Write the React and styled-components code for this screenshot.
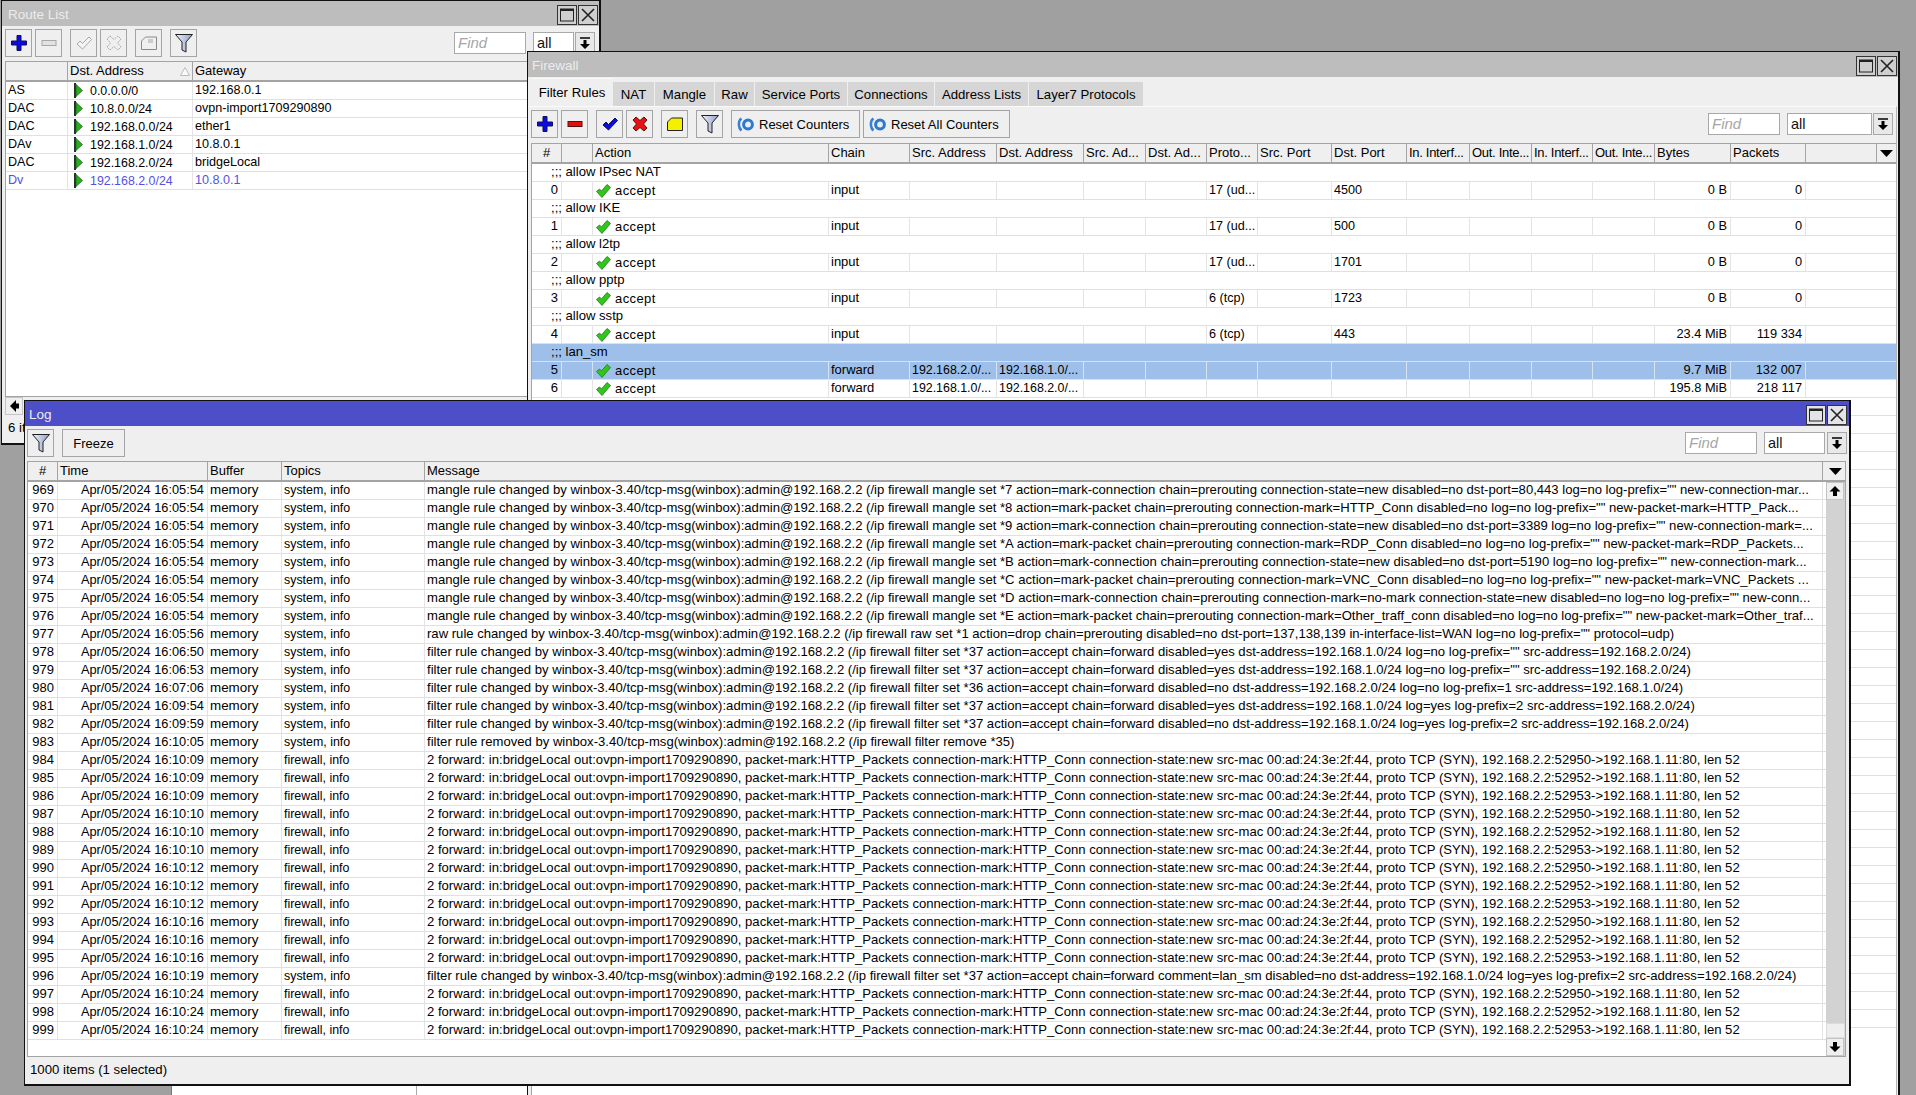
import styled, { createGlobalStyle } from "styled-components";

const GlobalStyle = createGlobalStyle`
  html, body { margin: 0; padding: 0; height: 100%; overflow: hidden; }
  body { background: #a0a0a0; font-family: "Liberation Sans", Arial, sans-serif; font-size: 12.6px; color: #000; }
`;

const routeCols = "62px 125px 1fr";
const firewallCols = "30px 31px 236px 81px 87px 87px 62px 61px 51px 74px 75px 63px 62px 61px 62px 76px 75px 71px 20px";
const logCols = "30px 150px 74px 143px 1398px 23px";

const routes = [
  ["AS", "0.0.0.0/0", "192.168.0.1"],
  ["DAC", "10.8.0.0/24", "ovpn-import1709290890"],
  ["DAC", "192.168.0.0/24", "ether1"],
  ["DAv", "192.168.1.0/24", "10.8.0.1"],
  ["DAC", "192.168.2.0/24", "bridgeLocal"],
  ["Dv", "192.168.2.0/24", "10.8.0.1", true],
];

const firewallHead = ["#", "", "Action", "Chain", "Src. Address", "Dst. Address", "Src. Ad...", "Dst. Ad...", "Proto...", "Src. Port", "Dst. Port", "In. Interf...", "Out. Inte...", "In. Interf...", "Out. Inte...", "Bytes", "Packets", ""];

const rules = [
  { comment: "allow IPsec NAT" },
  { n: 0, chain: "input", proto: "17 (ud...", port: "4500", bytes: "0 B", packets: "0" },
  { comment: "allow IKE" },
  { n: 1, chain: "input", proto: "17 (ud...", port: "500", bytes: "0 B", packets: "0" },
  { comment: "allow l2tp" },
  { n: 2, chain: "input", proto: "17 (ud...", port: "1701", bytes: "0 B", packets: "0" },
  { comment: "allow pptp" },
  { n: 3, chain: "input", proto: "6 (tcp)", port: "1723", bytes: "0 B", packets: "0" },
  { comment: "allow sstp" },
  { n: 4, chain: "input", proto: "6 (tcp)", port: "443", bytes: "23.4 MiB", packets: "119 334" },
  { comment: "lan_sm", selected: true },
  { n: 5, chain: "forward", src: "192.168.2.0/...", dst: "192.168.1.0/...", bytes: "9.7 MiB", packets: "132 007", selected: true },
  { n: 6, chain: "forward", src: "192.168.1.0/...", dst: "192.168.2.0/...", bytes: "195.8 MiB", packets: "218 117" },
];

const tabs = ["NAT", "Mangle", "Raw", "Service Ports", "Connections", "Address Lists", "Layer7 Protocols"];
const tabWidths = [41, 59, 39, 92, 86, 93, 114];

const by = "changed by winbox-3.40/tcp-msg(winbox):admin@192.168.2.2 (/ip firewall";
const mangle = (rest) => `mangle rule ${by} mangle set ${rest}`;
const filter = (rest) => `filter rule ${by} filter set ${rest}`;
const fw = (port) => `2 forward: in:bridgeLocal out:ovpn-import1709290890, packet-mark:HTTP_Packets connection-mark:HTTP_Conn connection-state:new src-mac 00:ad:24:3e:2f:44, proto TCP (SYN), 192.168.2.2:${port}->192.168.1.11:80, len 52`;
const sys = "system, info";
const fwt = "firewall, info";

const logs = [
  [969, "16:05:54", sys, mangle(`*7 action=mark-connection chain=prerouting connection-state=new disabled=no dst-port=80,443 log=no log-prefix="" new-connection-mar...`)],
  [970, "16:05:54", sys, mangle(`*8 action=mark-packet chain=prerouting connection-mark=HTTP_Conn disabled=no log=no log-prefix="" new-packet-mark=HTTP_Pack...`)],
  [971, "16:05:54", sys, mangle(`*9 action=mark-connection chain=prerouting connection-state=new disabled=no dst-port=3389 log=no log-prefix="" new-connection-mark=...`)],
  [972, "16:05:54", sys, mangle(`*A action=mark-packet chain=prerouting connection-mark=RDP_Conn disabled=no log=no log-prefix="" new-packet-mark=RDP_Packets...`)],
  [973, "16:05:54", sys, mangle(`*B action=mark-connection chain=prerouting connection-state=new disabled=no dst-port=5190 log=no log-prefix="" new-connection-mark...`)],
  [974, "16:05:54", sys, mangle(`*C action=mark-packet chain=prerouting connection-mark=VNC_Conn disabled=no log=no log-prefix="" new-packet-mark=VNC_Packets ...`)],
  [975, "16:05:54", sys, mangle(`*D action=mark-connection chain=prerouting connection-mark=no-mark connection-state=new disabled=no log=no log-prefix="" new-conn...`)],
  [976, "16:05:54", sys, mangle(`*E action=mark-packet chain=prerouting connection-mark=Other_traff_conn disabled=no log=no log-prefix="" new-packet-mark=Other_traf...`)],
  [977, "16:05:56", sys, `raw rule ${by} raw set *1 action=drop chain=prerouting disabled=no dst-port=137,138,139 in-interface-list=WAN log=no log-prefix="" protocol=udp)`],
  [978, "16:06:50", sys, filter(`*37 action=accept chain=forward disabled=yes dst-address=192.168.1.0/24 log=no log-prefix="" src-address=192.168.2.0/24)`)],
  [979, "16:06:53", sys, filter(`*37 action=accept chain=forward disabled=yes dst-address=192.168.1.0/24 log=no log-prefix="" src-address=192.168.2.0/24)`)],
  [980, "16:07:06", sys, filter(`*36 action=accept chain=forward disabled=no dst-address=192.168.2.0/24 log=no log-prefix=1 src-address=192.168.1.0/24)`)],
  [981, "16:09:54", sys, filter(`*37 action=accept chain=forward disabled=yes dst-address=192.168.1.0/24 log=yes log-prefix=2 src-address=192.168.2.0/24)`)],
  [982, "16:09:59", sys, filter(`*37 action=accept chain=forward disabled=no dst-address=192.168.1.0/24 log=yes log-prefix=2 src-address=192.168.2.0/24)`)],
  [983, "16:10:05", sys, "filter rule removed by winbox-3.40/tcp-msg(winbox):admin@192.168.2.2 (/ip firewall filter remove *35)"],
  [984, "16:10:09", fwt, fw(52950)],
  [985, "16:10:09", fwt, fw(52952)],
  [986, "16:10:09", fwt, fw(52953)],
  [987, "16:10:10", fwt, fw(52950)],
  [988, "16:10:10", fwt, fw(52952)],
  [989, "16:10:10", fwt, fw(52953)],
  [990, "16:10:12", fwt, fw(52950)],
  [991, "16:10:12", fwt, fw(52952)],
  [992, "16:10:12", fwt, fw(52953)],
  [993, "16:10:16", fwt, fw(52950)],
  [994, "16:10:16", fwt, fw(52952)],
  [995, "16:10:16", fwt, fw(52953)],
  [996, "16:10:19", sys, filter(`*37 action=accept chain=forward comment=lan_sm disabled=no dst-address=192.168.1.0/24 log=yes log-prefix=2 src-address=192.168.2.0/24)`)],
  [997, "16:10:24", fwt, fw(52950)],
  [998, "16:10:24", fwt, fw(52952)],
  [999, "16:10:24", fwt, fw(52953)],
];

const PlusIcon = () => (
  <svg width="18" height="18" viewBox="0 0 18 18">
    <path d="M7 1.500h4v5.500h5.500v4H11v5.500H7V11H1.500V7H7z" fill="#0a0ae6" stroke="#10104a" strokeWidth="1" />
  </svg>
);

const MinusIcon = ({ off }) => (
  <svg width="18" height="18" viewBox="0 0 18 18">
    <rect x="2" y="6.500" width="14" height="5" fill={off ? "#e2e2e2" : "#e01010"} stroke={off ? "#a8a8a8" : "#5a1010"} />
  </svg>
);

const CheckIcon = () => (
  <svg width="18" height="18" viewBox="0 0 18 18">
    <path d="M2 10l3-3 2.500 2.500L14 3l2.500 2.500L7.500 15z" fill="#0a0ae6" stroke="#10104a" />
  </svg>
);

const CheckOffIcon = () => (
  <svg width="18" height="18" viewBox="0 0 18 18">
    <path d="M2 10l3-3 2.500 2.500L14 3l2.500 2.500L7.500 15z" fill="#f4f4f4" stroke="#a8a8a8" />
  </svg>
);

const CrossIcon = () => (
  <svg width="18" height="18" viewBox="0 0 18 18">
    <path d="M5 2l4 3.500L13 2l3 3-3.500 4L16 13l-3 3-4-3.500L5 16l-3-3 3.500-4L2 5z" fill="#e81010" stroke="#5a1010" />
  </svg>
);

const CrossOffIcon = () => (
  <svg width="18" height="18" viewBox="0 0 18 18">
    <path d="M5 2l4 3.500L13 2l3 3-3.500 4L16 13l-3 3-4-3.500L5 16l-3-3 3.500-4L2 5z" fill="#efefef" stroke="#a8a8a8" strokeDasharray="2 1" />
  </svg>
);

const NoteIcon = ({ off }) => (
  <svg width="18" height="18" viewBox="0 0 18 18">
    <path d="M1.500 15.500V7l4-4h11v12.500z" fill={off ? "#efefef" : "#f5f000"} stroke={off ? "#8a8a8a" : "#222"} />
    {off && <path d="M8 6h5M8 8h5" stroke="#a8a8a8" />}
  </svg>
);

const FilterIcon = () => (
  <svg width="20" height="22" viewBox="0 0 20 22">
    <defs>
      <linearGradient id="funnel" x1="0" y1="0" x2="1" y2="0">
        <stop offset="0" stopColor="#eef2fb" />
        <stop offset="1" stopColor="#8f9fc6" />
      </linearGradient>
    </defs>
    <path d="M1.500 2.500h17l-6.500 7.500v10l-4-2v-8z" fill="url(#funnel)" stroke="#222" />
  </svg>
);

const ResetIcon = () => (
  <svg width="17" height="15" viewBox="0 0 17 15">
    <path d="M4.500 1.500C1 3.500 1 10.500 4.500 13.500" fill="none" stroke="#3b7fd0" strokeWidth="2.500" />
    <circle cx="11" cy="7.500" r="4.400" fill="#e6eff9" stroke="#2f78cc" strokeWidth="3" />
  </svg>
);

const ComboIcon = () => (
  <svg width="12" height="12" viewBox="0 0 12 12">
    <path d="M1 1h10" stroke="#000" strokeWidth="1.500" />
    <path d="M4.500 3h3v4H11l-5 5-5-5h3.500z" fill="#000" />
  </svg>
);

const ArrowUp = () => (
  <svg width="12" height="10" viewBox="0 0 12 10">
    <path d="M6 0l5.500 5.500H8V10H4V5.500H.5z" fill="#000" />
  </svg>
);

const ArrowDown = () => (
  <svg width="12" height="10" viewBox="0 0 12 10">
    <path d="M6 10L.5 4.500H4V0h4v4.500h3.500z" fill="#000" />
  </svg>
);

const ArrowLeft = () => (
  <svg width="9" height="12" viewBox="0 0 9 12">
    <path d="M0 6l6-6v3.500h3v5H6V12z" fill="#000" />
  </svg>
);

const Caret = () => (
  <svg width="13" height="7" viewBox="0 0 13 7">
    <path d="M0 0h13L6.500 7z" fill="#000" />
  </svg>
);

const SortMark = () => (
  <svg width="10" height="9" viewBox="0 0 10 9">
    <path d="M5 .5L9.500 8.500H.5z" fill="#fafafa" stroke="#bbb" />
  </svg>
);

const RouteFlag = () => (
  <svg width="9" height="15" viewBox="0 0 9 15">
    <rect x="0" y="0" width="2" height="15" fill="#26332a" />
    <path d="M2 1.500L8.500 7.500 2 13.500z" fill="#26b01e" stroke="#1a5a1a" strokeWidth=".7" />
  </svg>
);

const AcceptIcon = () => (
  <svg width="15" height="14" viewBox="0 0 15 14">
    <path d="M.5 7.500L3.500 5l2 2L11 .5l3.500 3L6 13.500z" fill="#2fc81a" stroke="#1f7a18" strokeWidth=".8" />
  </svg>
);

const MaximizeIcon = () => (
  <svg width="14" height="14" viewBox="0 0 14 14">
    <rect x=".5" y="1" width="13" height="12" fill="none" stroke="#222" strokeWidth="1" />
    <path d="M.5 2h13" stroke="#222" strokeWidth="2" />
  </svg>
);

const CloseIcon = () => (
  <svg width="14" height="14" viewBox="0 0 14 14">
    <path d="M1 1l12 12M13 1L1 13" stroke="#222" strokeWidth="1.600" />
  </svg>
);

const Win = styled.div`
  position: absolute;
  left: ${(p) => p.$left}px;
  top: ${(p) => p.$top}px;
  width: ${(p) => p.$width}px;
  height: ${(p) => p.$height}px;
  box-sizing: border-box;
  display: flex;
  flex-direction: column;
  background: #efefef;
  border: 2px solid #111;
  border-width: 1px 2px 2px 1px;
  overflow: hidden;
`;

const BackWindow = styled.div`
  position: absolute;
  left: 171px;
  top: 1060px;
  width: 356px;
  height: 35px;
  background: #fff;
  border-left: 1px solid #777;
  box-sizing: border-box;
  display: flex;
  justify-content: flex-end;
`;

const BackColumn = styled.div`
  width: 110px;
  border-left: 1px solid #aaa;
`;

const TitleBar = styled.div`
  flex: 0 0 25px;
  display: flex;
  align-items: center;
  justify-content: space-between;
  padding: 2px ${(p) => p.$padRight ?? 1}px 0 ${(p) => p.$pad ?? 4}px;
  background: ${(p) => (p.$active ? "#4d4fc9" : "#bdbdbd")};
  color: #ececec;
  font-size: 13.500px;
  box-sizing: border-box;
`;

const TitleButtons = styled.div`
  display: flex;
  gap: 1px;
`;

const TitleButton = styled.div`
  width: 20px;
  height: 20px;
  box-sizing: border-box;
  border: 1px solid #333;
  background: ${(p) => (p.$active ? "#e4e4e8" : "#cfcfcf")};
  display: flex;
  align-items: center;
  justify-content: center;
`;

const Toolbar = styled.div`
  display: flex;
  align-items: flex-start;
  padding: ${(p) => p.$pad};
  flex: 0 0 ${(p) => p.$height}px;
  box-sizing: border-box;
`;

const ToolButton = styled.div`
  flex: 0 0 auto;
  width: ${(p) => (p.$wide ? `${p.$wide}px` : "27px")};
  height: 28px;
  box-sizing: border-box;
  margin-right: ${(p) => p.$gap ?? 3}px;
  border: 1px solid #a4a4a4;
  background: #efefef;
  display: flex;
  align-items: center;
  justify-content: ${(p) => (p.$start ? "flex-start" : "center")};
  padding-left: ${(p) => (p.$start ? 5 : 0)}px;
  gap: 5px;
  font-size: 13px;
`;

const Spacer = styled.div`
  flex: 1;
`;

const FindBox = styled.div`
  width: ${(p) => p.$width}px;
  height: 22px;
  margin: 3px ${(p) => p.$gap}px 0 0;
  box-sizing: border-box;
  border: 1px solid #a9a9a9;
  background: #fff;
  padding: 0 3px;
  line-height: 20px;
  font-size: ${(p) => (p.$hint ? 15 : 14.500)}px;
  color: ${(p) => (p.$hint ? "#a6a6a6" : "#111")};
  font-style: ${(p) => (p.$hint ? "italic" : "normal")};
`;

const ComboButton = styled.div`
  width: 20px;
  height: 22px;
  margin-top: 3px;
  box-sizing: border-box;
  border: 1px solid #a9a9a9;
  background: #e8e8e8;
  display: flex;
  align-items: center;
  justify-content: center;
`;

const Table = styled.div`
  flex: 1;
  min-height: 0;
  background: #fff;
  overflow: hidden;
  margin: ${(p) => p.$margin};
  border-left: 1px solid #a4a4a4;
  position: relative;
`;

const HeaderRow = styled.div`
  display: grid;
  grid-template-columns: ${(p) => p.$cols};
  height: 21px;
  box-sizing: border-box;
  background: #efefef;
  border-top: 1px solid #a4a4a4;
  border-bottom: 2px solid #a4a4a4;
`;

const HeaderCell = styled.div`
  border-right: 1px solid #a4a4a4;
  padding: 0 ${(p) => (p.$tight ? 0 : 2)}px 0 2px;
  line-height: 18px;
  font-size: 13px;
  letter-spacing: ${(p) => (p.$tight ? "-0.3px" : "normal")};
  white-space: nowrap;
  overflow: hidden;
  display: flex;
  align-items: center;
  justify-content: ${(p) => (p.$center ? "center" : "space-between")};
`;

const Row = styled.div`
  display: grid;
  grid-template-columns: ${(p) => p.$cols};
  height: 18px;
  box-sizing: border-box;
  border-bottom: 1px solid #e0e0e0;
  background: ${(p) => (p.$selected ? "#9dbfe9" : "#fff")};
  color: ${(p) => (p.$tint ? "#5550e6" : "#000")};
`;

const Cell = styled.div`
  border-right: ${(p) => (p.$bare ? "none" : `1px solid ${p.$selected ? "#d6e3f5" : "#e4e4e4"}`)};
  padding: ${(p) => (p.$right ? "0 3px 0 0" : "0 2px")};
  line-height: 16px;
  font-size: ${(p) => (p.$size ? `${p.$size}px` : "inherit")};
  white-space: nowrap;
  overflow: hidden;
  text-align: ${(p) => (p.$right ? "right" : "left")};
`;

const IconCell = styled(Cell)`
  display: flex;
  align-items: center;
  gap: ${(p) => p.$gap}px;
  padding-left: ${(p) => p.$pad}px;
`;

const ActionText = styled.span`
  font-size: 13px;
  letter-spacing: 0.4px;
`;

const CommentRow = styled(Row)`
  display: block;
  padding-left: 19px;
  line-height: 16px;
  font-size: 13.100px;
  white-space: nowrap;
`;

const TabStrip = styled.div`
  display: flex;
  align-items: flex-end;
  padding-left: 3px;
  flex: 0 0 29px;
  box-sizing: border-box;
  gap: 1px;
`;

const Tab = styled.div`
  width: ${(p) => p.$width}px;
  height: ${(p) => (p.$active ? 28 : 24)}px;
  margin-right: ${(p) => (p.$active ? -1 : 0)}px;
  box-sizing: border-box;
  background: ${(p) => (p.$active ? "#efefef" : "#d6d6d6")};
  border-top: ${(p) => (p.$active ? "1px solid #fafafa" : "none")};
  display: flex;
  align-items: center;
  justify-content: center;
  font-size: 13.200px;
`;

const TabPanel = styled.div`
  flex: 1;
  min-height: 0;
  display: flex;
  flex-direction: column;
  border-top: 1px solid #fafafa;
  border-right: 1px solid #b4b4b4;
  margin-right: 1px;
`;

const StatusBar = styled.div`
  flex: 0 0 ${(p) => p.$height}px;
  padding: 0 0 3px ${(p) => p.$pad}px;
  display: flex;
  align-items: center;
  font-size: 13.200px;
  box-sizing: border-box;
`;

const HScroll = styled.div`
  flex: 0 0 18px;
  margin: 0 0 0 3px;
  display: flex;
  border-top: 1px solid #a4a4a4;
`;

const ScrollButton = styled.div`
  width: 18px;
  height: 18px;
  flex: 0 0 18px;
  box-sizing: border-box;
  border: 1px solid #c4c4c4;
  background: #efefef;
  display: flex;
  align-items: center;
  justify-content: center;
`;

const LogBody = styled.div`
  flex: 1;
  min-height: 0;
  display: flex;
  margin: 0 3px 0 2px;
  border-bottom: 1px solid #a4a4a4;
  border-left: 1px solid #a4a4a4;
  border-right: 1px solid #a4a4a4;
  background: #fff;
`;

const LogColumn = styled.div`
  flex: 1;
  min-width: 0;
  position: relative;
`;

const VScroll = styled.div`
  flex: 0 0 19px;
  display: flex;
  flex-direction: column;
  background: #d2d2d2;
  margin-top: 21px;
`;

const VScrollGap = styled.div`
  flex: 1;
`;

const VScrollThumb = styled.div`
  flex: 0 0 15px;
  background: #efefef;
  border: 1px solid #dcdcdc;
  box-sizing: border-box;
`;

const CaretBox = styled.div`
  position: absolute;
  top: 0;
  right: -19px;
  width: 19px;
  height: 21px;
  background: #efefef;
  border-top: 1px solid #a4a4a4;
  border-bottom: 2px solid #a4a4a4;
  box-sizing: border-box;
  display: flex;
  align-items: center;
  justify-content: center;
`;

const LogHeaderRow = styled(HeaderRow)`
  overflow: visible;
`;

const WindowControls = ({ active }) => (
  <TitleButtons>
    <TitleButton $active={active}><MaximizeIcon /></TitleButton>
    <TitleButton $active={active}><CloseIcon /></TitleButton>
  </TitleButtons>
);

const RouteWindow = () => (
  <Win $left={1} $top={0} $width={600} $height={445}>
    <TitleBar $pad={6}>Route List<WindowControls /></TitleBar>
    <Toolbar $pad="3px 4px 0 3px" $height={35}>
      <ToolButton><PlusIcon /></ToolButton>
      <ToolButton $gap={8}><MinusIcon off /></ToolButton>
      <ToolButton><CheckOffIcon /></ToolButton>
      <ToolButton $gap={8}><CrossOffIcon /></ToolButton>
      <ToolButton $gap={8}><NoteIcon off /></ToolButton>
      <ToolButton><FilterIcon /></ToolButton>
      <Spacer />
      <FindBox $width={72} $gap={7} $hint>Find</FindBox>
      <FindBox $width={41} $gap={1}>all</FindBox>
      <ComboButton><ComboIcon /></ComboButton>
    </Toolbar>
    <Table $margin="0 0 0 3px">
      <HeaderRow $cols={routeCols}>
        <HeaderCell />
        <HeaderCell>Dst. Address<SortMark /></HeaderCell>
        <HeaderCell>Gateway</HeaderCell>
      </HeaderRow>
      {routes.map(([flags, dst, gw, tint], i) => (
        <Row key={i} $cols={routeCols} $tint={tint}>
          <Cell>{flags}</Cell>
          <IconCell $pad={6} $gap={7} $size={12.4}><RouteFlag />{dst}</IconCell>
          <Cell $bare>{gw}</Cell>
        </Row>
      ))}
    </Table>
    <HScroll>
      <ScrollButton><ArrowLeft /></ScrollButton>
    </HScroll>
    <StatusBar $height={28} $pad={6}>6 items</StatusBar>
  </Win>
);

const FirewallWindow = () => (
  <Win $left={527} $top={51} $width={1373} $height={1060}>
    <TitleBar>Firewall<WindowControls /></TitleBar>
    <TabStrip>
      <Tab $active $width={82}>Filter Rules</Tab>
      {tabs.map((t, i) => <Tab key={t} $width={tabWidths[i]}>{t}</Tab>)}
    </TabStrip>
    <TabPanel>
      <Toolbar $pad="3px 3px 0 3px" $height={36}>
        <ToolButton><PlusIcon /></ToolButton>
        <ToolButton $gap={8}><MinusIcon /></ToolButton>
        <ToolButton><CheckIcon /></ToolButton>
        <ToolButton $gap={8}><CrossIcon /></ToolButton>
        <ToolButton $gap={8}><NoteIcon /></ToolButton>
        <ToolButton $gap={8}><FilterIcon /></ToolButton>
        <ToolButton $wide={129} $start><ResetIcon />Reset Counters</ToolButton>
        <ToolButton $wide={147} $start><ResetIcon />Reset All Counters</ToolButton>
        <Spacer />
        <FindBox $width={72} $gap={7} $hint>Find</FindBox>
        <FindBox $width={85} $gap={1}>all</FindBox>
        <ComboButton><ComboIcon /></ComboButton>
      </Toolbar>
      <Table $margin="0 0 0 3px">
        <HeaderRow $cols={firewallCols}>
          {firewallHead.map((h, i) => (
            <HeaderCell key={i} $center={i === 0} $tight={i >= 11 && i <= 14}>{h}</HeaderCell>
          ))}
          <HeaderCell $center><Caret /></HeaderCell>
        </HeaderRow>
        {rules.map((r, i) =>
          r.comment ? (
            <CommentRow key={i} $cols={firewallCols} $selected={r.selected}>;;; {r.comment}</CommentRow>
          ) : (
            <Row key={i} $cols={firewallCols} $selected={r.selected}>
              <Cell $right $size={13} $selected={r.selected}>{r.n}</Cell>
              <Cell $selected={r.selected} />
              <IconCell $pad={3} $gap={4} $selected={r.selected}><AcceptIcon /><ActionText>accept</ActionText></IconCell>
              <Cell $size={13} $selected={r.selected}>{r.chain}</Cell>
              <Cell $size={12.4} $selected={r.selected}>{r.src}</Cell>
              <Cell $size={12.4} $selected={r.selected}>{r.dst}</Cell>
              <Cell $selected={r.selected} />
              <Cell $selected={r.selected} />
              <Cell $selected={r.selected}>{r.proto}</Cell>
              <Cell $selected={r.selected} />
              <Cell $selected={r.selected}>{r.port}</Cell>
              <Cell $selected={r.selected} />
              <Cell $selected={r.selected} />
              <Cell $selected={r.selected} />
              <Cell $selected={r.selected} />
              <Cell $right $size={12.8} $selected={r.selected}>{r.bytes}</Cell>
              <Cell $right $size={12.8} $selected={r.selected}>{r.packets}</Cell>
            </Row>
          )
        )}
        {Array.from({ length: 35 }, (_, i) => <Row key={i} $cols={firewallCols} />)}
      </Table>
    </TabPanel>
  </Win>
);

const LogWindow = () => (
  <Win $left={24} $top={400} $width={1827} $height={686}>
    <TitleBar $active $padRight={2}>Log<WindowControls active /></TitleBar>
    <Toolbar $pad="3px 2px 0 2px" $height={35}>
      <ToolButton $gap={8}><FilterIcon /></ToolButton>
      <ToolButton $wide={63}>Freeze</ToolButton>
      <Spacer />
      <FindBox $width={72} $gap={7} $hint>Find</FindBox>
      <FindBox $width={61} $gap={2}>all</FindBox>
      <ComboButton><ComboIcon /></ComboButton>
    </Toolbar>
    <LogBody>
      <LogColumn>
        <LogHeaderRow $cols={logCols}>
          <HeaderCell $center>#</HeaderCell>
          <HeaderCell>Time</HeaderCell>
          <HeaderCell>Buffer</HeaderCell>
          <HeaderCell>Topics</HeaderCell>
          <HeaderCell>Message</HeaderCell>
        </LogHeaderRow>
        <CaretBox><Caret /></CaretBox>
        {logs.map(([n, time, topic, msg]) => (
          <Row key={n} $cols={logCols}>
            <Cell $right $size={13}>{n}</Cell>
            <Cell $right $size={12.8}>{`Apr/05/2024 ${time}`}</Cell>
            <Cell $size={13.4}>memory</Cell>
            <Cell $size={12.4}>{topic}</Cell>
            <Cell $size={13.1}>{msg}</Cell>
          </Row>
        ))}
      </LogColumn>
      <VScroll>
        <ScrollButton><ArrowUp /></ScrollButton>
        <VScrollGap />
        <VScrollThumb />
        <ScrollButton><ArrowDown /></ScrollButton>
      </VScroll>
    </LogBody>
    <StatusBar $height={27} $pad={5}>1000 items (1 selected)</StatusBar>
  </Win>
);

export default function App() {
  return (
    <>
      <GlobalStyle />
      <RouteWindow />
      <BackWindow><BackColumn /></BackWindow>
      <FirewallWindow />
      <LogWindow />
    </>
  );
}
